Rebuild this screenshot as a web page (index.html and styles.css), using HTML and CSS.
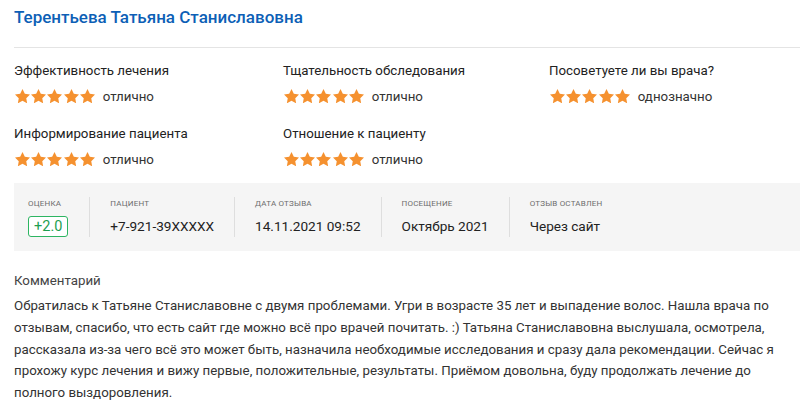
FILE: index.html
```html
<!DOCTYPE html>
<html lang="ru">
<head>
<meta charset="utf-8">
<link rel="stylesheet" href="styles.css">
</head>
<body>
<div class="review">
  <h1 class="doctor">Терентьева Татьяна Станиславовна</h1>
  <div class="ratings">
    <div class="rating">
      <div class="rating-label">Эффективность лечения</div>
      <div class="rating-value">
        <span class="stars">
          <svg viewBox="2 2 20 19"><path d="M12 2l3.09 6.26L22 9.27l-5 4.87 1.18 6.88L12 17.77l-6.18 3.25L7 14.14 2 9.27l6.91-1.01L12 2z"/></svg>
          <svg viewBox="2 2 20 19"><path d="M12 2l3.09 6.26L22 9.27l-5 4.87 1.18 6.88L12 17.77l-6.18 3.25L7 14.14 2 9.27l6.91-1.01L12 2z"/></svg>
          <svg viewBox="2 2 20 19"><path d="M12 2l3.09 6.26L22 9.27l-5 4.87 1.18 6.88L12 17.77l-6.18 3.25L7 14.14 2 9.27l6.91-1.01L12 2z"/></svg>
          <svg viewBox="2 2 20 19"><path d="M12 2l3.09 6.26L22 9.27l-5 4.87 1.18 6.88L12 17.77l-6.18 3.25L7 14.14 2 9.27l6.91-1.01L12 2z"/></svg>
          <svg viewBox="2 2 20 19"><path d="M12 2l3.09 6.26L22 9.27l-5 4.87 1.18 6.88L12 17.77l-6.18 3.25L7 14.14 2 9.27l6.91-1.01L12 2z"/></svg>
        </span>
        <span class="rating-text">отлично</span>
      </div>
    </div>
    <div class="rating">
      <div class="rating-label">Тщательность обследования</div>
      <div class="rating-value">
        <span class="stars">
          <svg viewBox="2 2 20 19"><path d="M12 2l3.09 6.26L22 9.27l-5 4.87 1.18 6.88L12 17.77l-6.18 3.25L7 14.14 2 9.27l6.91-1.01L12 2z"/></svg>
          <svg viewBox="2 2 20 19"><path d="M12 2l3.09 6.26L22 9.27l-5 4.87 1.18 6.88L12 17.77l-6.18 3.25L7 14.14 2 9.27l6.91-1.01L12 2z"/></svg>
          <svg viewBox="2 2 20 19"><path d="M12 2l3.09 6.26L22 9.27l-5 4.87 1.18 6.88L12 17.77l-6.18 3.25L7 14.14 2 9.27l6.91-1.01L12 2z"/></svg>
          <svg viewBox="2 2 20 19"><path d="M12 2l3.09 6.26L22 9.27l-5 4.87 1.18 6.88L12 17.77l-6.18 3.25L7 14.14 2 9.27l6.91-1.01L12 2z"/></svg>
          <svg viewBox="2 2 20 19"><path d="M12 2l3.09 6.26L22 9.27l-5 4.87 1.18 6.88L12 17.77l-6.18 3.25L7 14.14 2 9.27l6.91-1.01L12 2z"/></svg>
        </span>
        <span class="rating-text">отлично</span>
      </div>
    </div>
    <div class="rating">
      <div class="rating-label">Посоветуете ли вы врача?</div>
      <div class="rating-value">
        <span class="stars">
          <svg viewBox="2 2 20 19"><path d="M12 2l3.09 6.26L22 9.27l-5 4.87 1.18 6.88L12 17.77l-6.18 3.25L7 14.14 2 9.27l6.91-1.01L12 2z"/></svg>
          <svg viewBox="2 2 20 19"><path d="M12 2l3.09 6.26L22 9.27l-5 4.87 1.18 6.88L12 17.77l-6.18 3.25L7 14.14 2 9.27l6.91-1.01L12 2z"/></svg>
          <svg viewBox="2 2 20 19"><path d="M12 2l3.09 6.26L22 9.27l-5 4.87 1.18 6.88L12 17.77l-6.18 3.25L7 14.14 2 9.27l6.91-1.01L12 2z"/></svg>
          <svg viewBox="2 2 20 19"><path d="M12 2l3.09 6.26L22 9.27l-5 4.87 1.18 6.88L12 17.77l-6.18 3.25L7 14.14 2 9.27l6.91-1.01L12 2z"/></svg>
          <svg viewBox="2 2 20 19"><path d="M12 2l3.09 6.26L22 9.27l-5 4.87 1.18 6.88L12 17.77l-6.18 3.25L7 14.14 2 9.27l6.91-1.01L12 2z"/></svg>
        </span>
        <span class="rating-text">однозначно</span>
      </div>
    </div>
    <div class="rating">
      <div class="rating-label">Информирование пациента</div>
      <div class="rating-value">
        <span class="stars">
          <svg viewBox="2 2 20 19"><path d="M12 2l3.09 6.26L22 9.27l-5 4.87 1.18 6.88L12 17.77l-6.18 3.25L7 14.14 2 9.27l6.91-1.01L12 2z"/></svg>
          <svg viewBox="2 2 20 19"><path d="M12 2l3.09 6.26L22 9.27l-5 4.87 1.18 6.88L12 17.77l-6.18 3.25L7 14.14 2 9.27l6.91-1.01L12 2z"/></svg>
          <svg viewBox="2 2 20 19"><path d="M12 2l3.09 6.26L22 9.27l-5 4.87 1.18 6.88L12 17.77l-6.18 3.25L7 14.14 2 9.27l6.91-1.01L12 2z"/></svg>
          <svg viewBox="2 2 20 19"><path d="M12 2l3.09 6.26L22 9.27l-5 4.87 1.18 6.88L12 17.77l-6.18 3.25L7 14.14 2 9.27l6.91-1.01L12 2z"/></svg>
          <svg viewBox="2 2 20 19"><path d="M12 2l3.09 6.26L22 9.27l-5 4.87 1.18 6.88L12 17.77l-6.18 3.25L7 14.14 2 9.27l6.91-1.01L12 2z"/></svg>
        </span>
        <span class="rating-text">отлично</span>
      </div>
    </div>
    <div class="rating">
      <div class="rating-label">Отношение к пациенту</div>
      <div class="rating-value">
        <span class="stars">
          <svg viewBox="2 2 20 19"><path d="M12 2l3.09 6.26L22 9.27l-5 4.87 1.18 6.88L12 17.77l-6.18 3.25L7 14.14 2 9.27l6.91-1.01L12 2z"/></svg>
          <svg viewBox="2 2 20 19"><path d="M12 2l3.09 6.26L22 9.27l-5 4.87 1.18 6.88L12 17.77l-6.18 3.25L7 14.14 2 9.27l6.91-1.01L12 2z"/></svg>
          <svg viewBox="2 2 20 19"><path d="M12 2l3.09 6.26L22 9.27l-5 4.87 1.18 6.88L12 17.77l-6.18 3.25L7 14.14 2 9.27l6.91-1.01L12 2z"/></svg>
          <svg viewBox="2 2 20 19"><path d="M12 2l3.09 6.26L22 9.27l-5 4.87 1.18 6.88L12 17.77l-6.18 3.25L7 14.14 2 9.27l6.91-1.01L12 2z"/></svg>
          <svg viewBox="2 2 20 19"><path d="M12 2l3.09 6.26L22 9.27l-5 4.87 1.18 6.88L12 17.77l-6.18 3.25L7 14.14 2 9.27l6.91-1.01L12 2z"/></svg>
        </span>
        <span class="rating-text">отлично</span>
      </div>
    </div>
  </div>

  <div class="meta">
    <div class="meta-item">
      <div class="meta-label">Оценка</div>
      <div class="meta-value"><span class="score">+2.0</span></div>
    </div>
    <div class="meta-item">
      <div class="meta-label">Пациент</div>
      <div class="meta-value">+7-921-39XXXXX</div>
    </div>
    <div class="meta-item">
      <div class="meta-label">Дата отзыва</div>
      <div class="meta-value">14.11.2021 09:52</div>
    </div>
    <div class="meta-item">
      <div class="meta-label">Посещение</div>
      <div class="meta-value">Октябрь 2021</div>
    </div>
    <div class="meta-item">
      <div class="meta-label">Отзыв оставлен</div>
      <div class="meta-value">Через сайт</div>
    </div>
  </div>

  <div class="comment">
    <div class="comment-title">Комментарий</div>
    <p class="comment-text">Обратилась к Татьяне Станиславовне с двумя проблемами. Угри в возрасте 35 лет и выпадение волос. Нашла врача по отзывам, спасибо, что есть сайт где можно всё про врачей почитать. :) Татьяна Станиславовна выслушала, осмотрела, рассказала из-за чего всё это может быть, назначила необходимые исследования и сразу дала рекомендации. Сейчас я прохожу курс лечения и вижу первые, положительные, результаты. Приёмом довольна, буду продолжать лечение до полного выздоровления.</p>
  </div>
</div>
</body>
</html>
```

FILE: styles.css
```css
* { box-sizing: border-box; }

html, body {
  margin: 0;
  padding: 0;
  background: #fff;
}

body {
  font-family: Roboto, "Liberation Sans", Arial, sans-serif;
  color: #222;
  overflow: hidden;
}

.review {
  padding-left: 14px;
  width: 800px;
}

.doctor {
  margin: 7px 0 0;
  font-size: 17px;
  line-height: 20px;
  font-weight: 500;
  color: #0d5fb6;
  padding-bottom: 20px;
  border-bottom: 1px solid #e4e4e4;
}

.ratings {
  display: grid;
  grid-template-columns: 269px 266px 1fr;
  row-gap: 18px;
  padding-top: 13px;
}

.rating-label {
  font-size: 13.3px;
  line-height: 20px;
  color: #222;
}

.rating-value {
  display: flex;
  align-items: center;
  height: 20px;
  margin-top: 5px;
}

.stars {
  display: flex;
  gap: 1.2px;
  margin-left: 1px;
}

.stars svg {
  width: 15px;
  height: 14.3px;
  fill: #f5912f;
  display: block;
}

.rating-text {
  margin-left: 8px;
  font-size: 13.3px;
  color: #333;
}

.meta {
  display: flex;
  margin-top: 14px;
  background: #f5f5f5;
  padding: 14px 14px;
}

.meta-item {
  padding: 0 20px;
  border-left: 1px solid #dedede;
}

.meta-item:first-child {
  border-left: none;
  padding-left: 0;
  padding-right: 21px;
}

.meta-label {
  font-size: 8px;
  line-height: 13px;
  text-transform: uppercase;
  color: #6d6d6d;
  letter-spacing: 0.2px;
}

.meta-value {
  margin-top: 6px;
  font-size: 13.6px;
  line-height: 21px;
  color: #222;
}

.score {
  display: inline-block;
  border: 1px solid #2db562;
  border-radius: 3px;
  padding: 0 5px;
  font-size: 14.5px;
  line-height: 19px;
  color: #1e9e50;
  background: #fff;
}

.comment {
  margin-top: 19px;
}

.comment-title {
  font-size: 13.3px;
  line-height: 22px;
  color: #444;
}

.comment-text {
  margin: 3px 0 0;
  font-size: 13.3px;
  line-height: 21.8px;
  color: #333;
}
```
